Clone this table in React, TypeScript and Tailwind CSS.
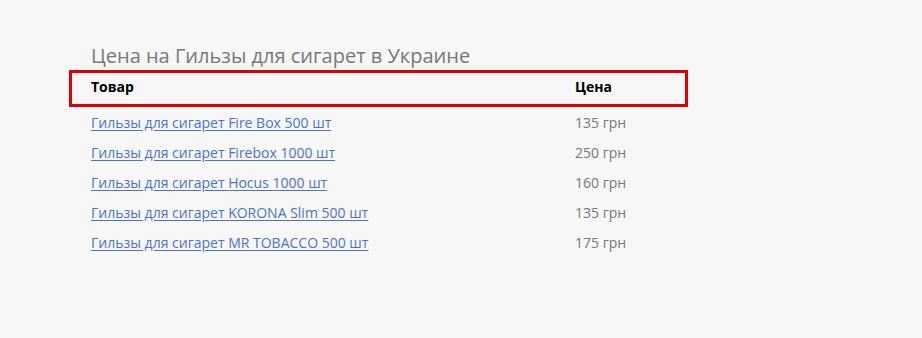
const rows = [
  { name: 'Гильзы для сигарет Fire Box 500 шт', price: '135 грн' },
  { name: 'Гильзы для сигарет Firebox 1000 шт', price: '250 грн' },
  { name: 'Гильзы для сигарет Hocus 1000 шт', price: '160 грн' },
  { name: 'Гильзы для сигарет KORONA Slim 500 шт', price: '135 грн' },
  { name: 'Гильзы для сигарет MR TOBACCO 500 шт', price: '175 грн' },
]

export default function App() {
  return (
    <div
      className="h-[338px] w-[922px] bg-[#f7f7f7] pt-[42px] pl-[69px]"
      style={{ fontFamily: '"Open Sans", sans-serif' }}
    >
      <h2 className="pl-[22px] text-[20px] leading-[28px] text-[#777]">
        Цена на Гильзы для сигарет в Украине
      </h2>
      <div className="flex h-[37px] w-[619px] items-center border-[3px] border-[#e00000] pb-[4px] pl-[19px] text-[14px] font-bold text-black">
        <div className="w-[484px]">Товар</div>
        <div>Цена</div>
      </div>
      <div className="pl-[22px]">
        {rows.map((row) => (
          <div key={row.name} className="flex h-[30px] items-center text-[14px]">
            <a href="#" className="w-[484px] text-[#4a72c8] underline underline-offset-2">
              {row.name}
            </a>
            <span className="text-[#777]">{row.price}</span>
          </div>
        ))}
      </div>
    </div>
  )
}
